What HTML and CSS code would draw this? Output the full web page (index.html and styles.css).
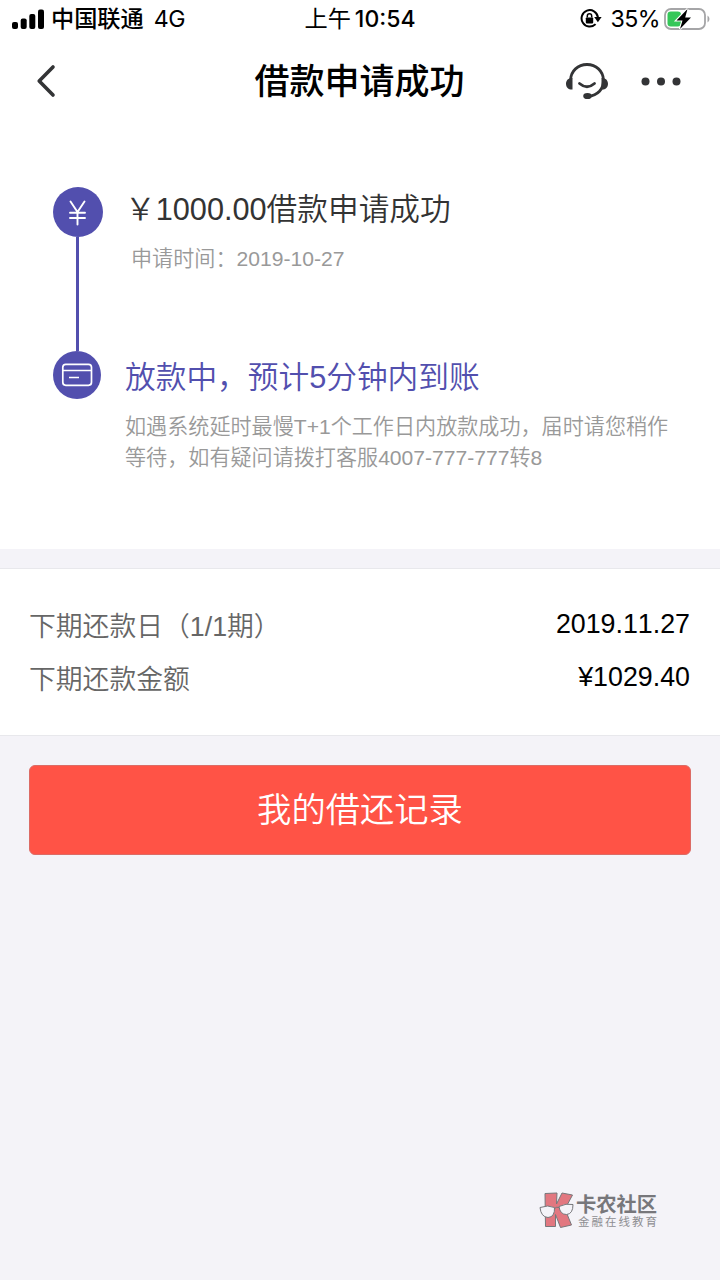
FILE: index.html
```html
<!DOCTYPE html>
<html lang="zh-CN">
<head>
<meta charset="UTF-8">
<title>借款申请成功</title>
<link rel="stylesheet" href="styles.css">
</head>
<body>
<div class="screen">
  <header class="top">
    <div class="status">
      <div class="status-left">
        <svg class="signal" width="32" height="21" viewBox="0 0 32 21"><rect x="0" y="13" width="6" height="7" rx="2"/><rect x="8.7" y="9.5" width="6" height="10.5" rx="2"/><rect x="17.3" y="5" width="6" height="15" rx="2"/><rect x="26" y="0.5" width="6" height="19.5" rx="2"/></svg>
        <span class="carrier">中国联通</span>
        <span class="network">4G</span>
      </div>
      <div class="clock"><span class="ampm">上午</span><span class="digits">10:54</span></div>
      <div class="status-right">
        <svg class="lock" width="22" height="20" viewBox="0 0 22 20"><path d="M15.6 15.1A8.2 8.2 0 1 1 17.9 8.2" fill="none" stroke="#000" stroke-width="2"/><path d="M14.2 8h7.4l-3.7 5.2z"/><rect x="5.800" y="8.400" width="7.400" height="6" rx=".8"/><path d="M7.300 8.500V7a2.200 2.200 0 0 1 4.400 0v1.500" fill="none" stroke="#000" stroke-width="1.500"/></svg>
        <span class="percent">35%</span>
        <svg class="battery" width="47" height="24" viewBox="0 0 47 24"><rect x="2" y="2" width="40" height="20" rx="6" fill="#fff" stroke="#a5a5a7" stroke-width="1.800"/><path d="M44.500 8.500q2 1.200 2 3.500t-2 3.500z" fill="#a5a5a7"/><rect x="4.500" y="4.500" width="13.500" height="15" rx="3.300" fill="#35c759"/><path d="M24.500 2 13.500 13.400h6L17 22 28 10.500h-5.800z" fill="#000" stroke="#fff" stroke-width="2.200" paint-order="stroke"/></svg>
      </div>
    </div>
    <nav class="nav">
      <svg class="back" width="20" height="34" viewBox="0 0 20 34"><path d="M17 3 3.2 17 17 31" fill="none" stroke="#333436" stroke-width="3.6" stroke-linecap="round" stroke-linejoin="round"/></svg>
      <h1 class="title">借款申请成功</h1>
      <div class="actions">
        <svg class="service" width="44" height="38" viewBox="0 0 44 38"><g fill="none" stroke="#333436" stroke-width="2.8" stroke-linecap="round"><path d="M5.500 18C6 9 12.800 2.500 22 2.500S38 9 38.500 18C38.500 27 33 33.500 23 34.300"/><path d="M14.500 21.500q7.500 6.500 15 0"/></g><path d="M7.500 16v11.500C4 28 1 25.500 1 21.700S4 15.500 7.500 16zM36.500 16v11.500c3.500.5 6.500-2 6.500-5.800s-3-6.200-6.500-5.700z" fill="#333436"/><ellipse cx="22.500" cy="34" rx="4.300" ry="3.100" fill="#333436"/></svg>
        <svg class="more" width="40" height="10" viewBox="0 0 40 10" fill="#333436"><circle cx="4.500" cy="5.500" r="4"/><circle cx="20" cy="5.500" r="4"/><circle cx="35.500" cy="5.500" r="4"/></svg>
      </div>
    </nav>
  </header>

  <main>
    <section class="progress">
      <div class="step step-done">
        <div class="rail">
          <svg width="50" height="50" viewBox="0 0 50 50"><circle cx="25" cy="25" r="25" fill="#524fae"/><path d="M17.500 14.500 24.500 25l7-10.500M17 25.700h15M17 31h15M24.500 25v12.500" fill="none" stroke="#fff" stroke-width="1.900" stroke-linecap="round"/></svg>
          <div class="line"></div>
        </div>
        <div class="step-text">
          <h2 class="step-title">&#xFFE5;1000.00借款申请成功</h2>
          <p class="step-note indent">申请时间&#xFF1A;2019-10-27</p>
        </div>
      </div>
      <div class="step">
        <div class="rail">
          <svg width="48" height="48" viewBox="0 0 48 48"><circle cx="24" cy="24" r="24" fill="#524fae"/><g fill="none" stroke="#fff" stroke-width="1.700"><rect x="9.800" y="13.300" width="28.700" height="21" rx="3"/><path d="M10 19.500h28.500M16 26.500h10" /></g></svg>
        </div>
        <div class="step-text">
          <h2 class="step-title current">放款中&#xFF0C;预计5分钟内到账</h2>
          <p class="step-note">如遇系统延时最慢T+1个工作日内放款成功&#xFF0C;届时请您稍作<br>等待&#xFF0C;如有疑问请拨打客服4007-777-777转8</p>
        </div>
      </div>
    </section>

    <dl class="summary">
      <div class="row"><dt>下期还款日&#xFF08;1/1期&#xFF09;</dt><dd>2019.11.27</dd></div>
      <div class="row"><dt>下期还款金额</dt><dd>¥1029.40</dd></div>
    </dl>

    <button class="records">我的借还记录</button>
  </main>

  <footer class="brand">
    <svg class="brand-logo" width="35" height="36" viewBox="0 0 35 36"><path d="M6 1.500 18 1l-.5 11L23 1l10.500 2L26 17l6.500 16-11 2.500-5-13v12H6.500z" fill="#e27780" stroke="#77777b" stroke-width="1"/><g fill="#f4f3f8" stroke="#77777b" stroke-width="1"><path d="M1 15.500q8-3 14.500 0 .5 9.500-6.500 10Q2 25 1 15.500zM20 14.500q7-3.500 14-2 0 9.500-6.500 10-6.500 0-7.500-8z"/></g><path d="M15.500 16.500q2-2 4.500-1" fill="none" stroke="#77777b"/></svg>
    <div class="brand-text"><div class="brand-name">卡农社区</div><div class="brand-tag">金融在线教育</div></div>
  </footer>
</div>
</body>
</html>
```

FILE: styles.css
```css
* { box-sizing: border-box; }
body, h1, h2, p, dl, dd { margin: 0; }
body {
  background: #f4f3f8;
  font-family: "Liberation Sans", "Noto Sans CJK SC", sans-serif;
  font-kerning: none;
}
svg { display: block; flex: none; }
.screen {
  width: 720px;
  height: 1280px;
  display: flex;
  flex-direction: column;
  overflow: hidden;
}
.top { background: #fff; }
.status {
  height: 38px;
  padding: 0 10px 0 12px;
  display: grid;
  grid-template-columns: 1fr auto 1fr;
  align-items: center;
  font: 400 23.2px/38px Inter, "Noto Sans CJK SC", sans-serif;
  color: #000;
  white-space: nowrap;
}
.status-left, .status-right, .clock { display: flex; align-items: center; }
.carrier { margin-left: 7px; font-weight: 500; }
.network { margin-left: 10px; letter-spacing: -0.4px; }
.clock { margin-right: 2px; }
.digits { margin-left: 4px; font-weight: 450; font-size: 23px; }
.status-right { justify-content: flex-end; }
.percent { margin: 0 3px 0 9px; font-weight: 400; letter-spacing: -0.6px; }
.nav {
  height: 85px;
  padding: 0 39px 0 36px;
  display: grid;
  grid-template-columns: 1fr auto 1fr;
  align-items: center;
}
.title {
  padding: 2px 0 0 2px;
  font-size: 35px;
  font-weight: 500;
  line-height: 50px;
  color: #000;
}
.actions {
  display: flex;
  align-items: center;
  justify-content: flex-end;
  gap: 32px;
}
.progress {
  height: 426px;
  padding: 64px 0 0 53px;
  background: #fff;
}
.step { display: flex; }
.step-done { height: 164px; }
.rail {
  width: 50px;
  flex: none;
  display: flex;
  flex-direction: column;
}
.line {
  width: 3px;
  flex: 1;
  margin-left: 23px;
  background: #524fae;
}
.step-text { margin-left: 22px; white-space: nowrap; }
.step-title {
  font-size: 30.7px;
  font-weight: 350;
  line-height: 46px;
  color: #333;
}
.current { color: #524fae; margin-top: 4px; }
.step-note {
  margin-top: 10px;
  font-size: 21.1px;
  font-weight: 350;
  line-height: 31px;
  color: #999;
}
.indent { padding-left: 6px; }
.summary {
  height: 168px;
  margin-top: 19px;
  padding: 29px 30px 0 29px;
  background: #fff;
  border-top: 1px solid #e8e8ec;
  border-bottom: 1px solid #e8e8ec;
}
.row {
  height: 53px;
  display: flex;
  justify-content: space-between;
  font-size: 26.8px;
  font-weight: 350;
  line-height: 53px;
}
dt { padding-top: 3px; color: #666; }
dd { color: #000; }
.records {
  display: block;
  width: 662px;
  height: 90px;
  margin: 29px 0 0 29px;
  padding: 0;
  border: 1px solid #dc6b65;
  border-radius: 6px;
  background: #ff5346;
  color: #fff;
  font: 350 34.3px/88px "Liberation Sans", "Noto Sans CJK SC", sans-serif;
}
.brand {
  margin: auto 61px 52px auto;
  display: flex;
  gap: 2px;
}
.brand-text { white-space: nowrap; }
.brand-name {
  padding-top: 1px;
  font-size: 20.3px;
  font-weight: 700;
  line-height: 24px;
  color: #77777b;
}
.brand-tag {
  padding-left: 2px;
  font-size: 11.5px;
  line-height: 10px;
  letter-spacing: 2px;
  color: #8e8e92;
}
```
